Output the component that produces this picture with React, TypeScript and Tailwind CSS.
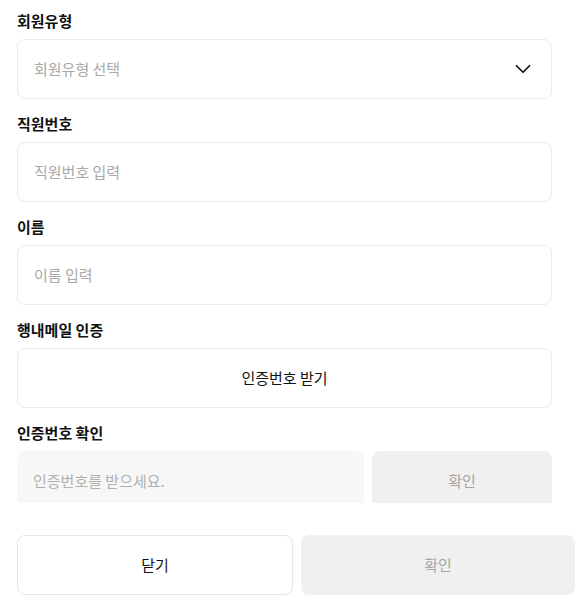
import { ChevronDown } from 'lucide-react';

const font = { fontFamily: '"Noto Sans CJK KR", "Noto Sans", sans-serif' };

function Label({ children }: { children: string }) {
  return <div className="h-[19px] mb-2 text-[15px] leading-[18px] font-bold text-[#111]">{children}</div>;
}

function TextInput({ placeholder }: { placeholder: string }) {
  return (
    <div className="h-[60px] rounded-lg border border-[#ebebeb] bg-white flex items-center px-4">
      <input
        className="w-full outline-none bg-transparent text-[15px] text-[#111] placeholder:text-[#a8a8a8]"
        placeholder={placeholder}
        style={font}
      />
    </div>
  );
}

export default function App() {
  return (
    <div className="w-[582px] h-[607px] bg-white flex flex-col" style={font}>
      {/* 스크롤 영역 */}
      <div className="h-[503px] overflow-hidden pl-[17px] pr-[30px] pt-3">
        <div className="flex flex-col gap-4">
          <div>
            <Label>회원유형</Label>
            <div className="h-[60px] rounded-lg border border-[#ebebeb] bg-white flex items-center justify-between pl-4 pr-[15px]">
              <span className="text-[15px] text-[#a8a8a8]">회원유형 선택</span>
              <ChevronDown size={26} strokeWidth={1.6} className="text-[#111]" />
            </div>
          </div>
          <div>
            <Label>직원번호</Label>
            <TextInput placeholder="직원번호 입력" />
          </div>
          <div>
            <Label>이름</Label>
            <TextInput placeholder="이름 입력" />
          </div>
          <div>
            <Label>행내메일 인증</Label>
            <button className="w-full h-[60px] rounded-lg border border-[#ebebeb] bg-white text-[15px] font-normal text-[#111]">
              인증번호 받기
            </button>
          </div>
          <div>
            <Label>인증번호 확인</Label>
            <div className="flex gap-[8px]">
              <div className="flex-1 h-[60px] rounded-lg bg-[#f7f7f7] flex items-center px-4">
                <span className="text-[15px] text-[#b0b0b0]">인증번호를 받으세요.</span>
              </div>
              <button className="w-[180px] h-[60px] rounded-lg bg-[#f0f0f0] text-[15px] font-normal text-[#a3a3a3]">
                확인
              </button>
            </div>
          </div>
        </div>
      </div>

      {/* 하단 버튼 */}
      <div className="flex gap-[8px] pl-[17px] pr-[7px] pt-8">
        <button className="flex-1 h-[60px] rounded-lg border border-[#e6e6e6] bg-white text-[15px] font-normal text-[#111]">
          닫기
        </button>
        <button className="flex-1 h-[60px] rounded-lg bg-[#f0f0f0] text-[15px] font-normal text-[#a3a3a3]">
          확인
        </button>
      </div>
    </div>
  );
}
